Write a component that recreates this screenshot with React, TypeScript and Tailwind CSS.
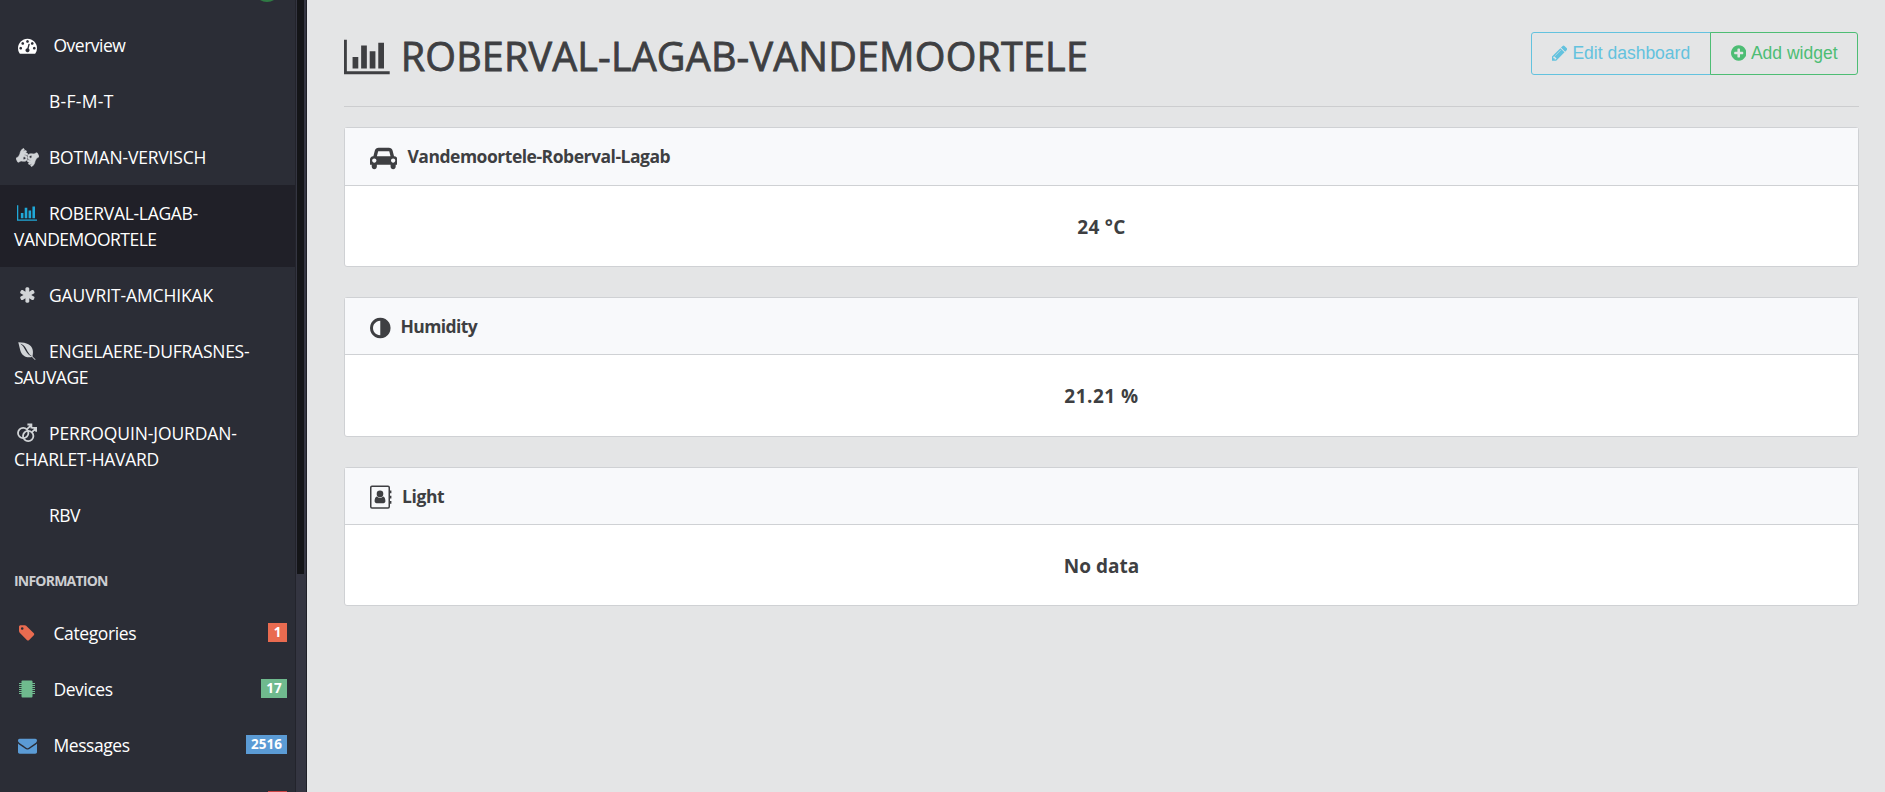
import React from "react";
import { FaAmericanSignLanguageInterpreting, FaEnvira } from "react-icons/fa";

type GlyphProps = { d: string; w?: number; size: number; cls?: string };

function Glyph({ d, w = 1792, size, cls = "" }: GlyphProps) {
  return (
    <svg viewBox={`0 0 ${w} 1792`} width={(size * w) / 1792} height={size} fill="currentColor" className={`shrink-0 ${cls}`}>
      <path d={d} />
    </svg>
  );
}

const CHART =
  "M640 896v512H384V896h256zm384-512v1024H768V384h256zm1024 1152v128H0V128h128v1408h1920zm-640-896v768h-256V640h256zm384-384v1152h-256V256h256z";
const TACHO =
  "M384 1152q0-53-37.5-90.5T256 1024t-90.5 37.5T128 1152t37.5 90.5T256 1280t90.5-37.5T384 1152zm192-448q0-53-37.5-90.5T448 576t-90.5 37.5T320 704t37.5 90.5T448 832t90.5-37.5T576 704zm428 481l101-382q6-26-7.5-48.5T1059 725t-48 6.5-30 39.5l-101 382q-60 5-107 43.5T710 1296q-20 77 20 146t117 89 146-20 89-117q16-60-6-117t-72-91zm660-33q0-53-37.5-90.5T1536 1024t-90.5 37.5-37.5 90.5 37.5 90.5 90.5 37.5 90.5-37.5 37.5-90.5zm-640-640q0-53-37.5-90.5T896 384t-90.5 37.5T768 512t37.5 90.5T896 640t90.5-37.5T1024 512zm448 192q0-53-37.5-90.5T1344 576t-90.5 37.5T1216 704t37.5 90.5T1344 832t90.5-37.5T1472 704zm320 448q0 261-141 483-19 29-54 29H195q-35 0-54-29Q0 1414 0 1152q0-182 71-348t191-286 286-191 348-71 348 71 286 191 191 286 71 348z";
const ASTERISK =
  "M1482 1050q46 26 59.5 77.5T1529 1225l-64 110q-26 46-77.5 59.5T1290 1382l-266-153v307q0 52-38 90t-90 38H768q-52 0-90-38t-38-90v-307l-266 153q-46 26-97.5 12.5T199 1335l-64-110q-26-46-12.5-97.5T182 1050l266-154-266-154q-46-26-59.5-77.5T135 567l64-110q26-46 77.5-59.5T374 410l266 153V256q0-52 38-90t90-38h128q52 0 90 38t38 90v307l266-153q46-26 97.5-12.5T1465 457l64 110q26 46 12.5 97.5T1482 742l-266 154z";
const TAG =
  "M448 448q0-53-37.5-90.5T320 320t-90.5 37.5T192 448t37.5 90.5T320 576t90.5-37.5T448 448zm1067 576q0 53-37 90l-491 492q-39 37-91 37-53 0-90-37L91 890q-38-37-64.5-101T0 672V256q0-52 38-90t90-38h416q53 0 117 26.5T763 219l715 714q37 39 37 91z";
const ENVELOPE =
  "M1792 710v794q0 66-47 113t-113 47H160q-66 0-113-47T0 1504V710q44 49 101 87 362 246 497 345 57 42 92.5 65.5t94.5 48 110 24.5h2q51 0 110-24.5t94.5-48 92.5-65.5q170-123 498-345 57-39 100-87zm0-294q0 79-49 151t-122 123q-376 261-468 325-10 7-42.5 31t-54 38.5-52 32.5-57.5 27-50 9h-2q-23 0-50-9t-57.5-27-52-32.5-54-38.5-42.5-31q-91-64-262-182.5T172 690q-62-42-117-115.5T0 438q0-78 41.5-130T160 256h1472q65 0 112.5 47t47.5 113z";
const PENCIL =
  "M363 1536l91-91-235-235-91 91v107h128v128h107zm523-928q0-22-22-22-10 0-17 7l-542 542q-7 7-7 17 0 22 22 22 10 0 17-7l542-542q7-7 7-17zm-54-192l416 416-832 832H0v-416zm683 96q0 53-37 90l-166 166-416-416 166-165q36-38 90-38 53 0 91 38l235 234q37 39 37 91z";
const PLUS =
  "M1216 960V832q0-26-19-45t-45-19H896V512q0-26-19-45t-45-19H704q-26 0-45 19t-19 45v256H384q-26 0-45 19t-19 45v128q0 26 19 45t45 19h256v256q0 26 19 45t45 19h128q26 0 45-19t19-45v-256h256q26 0 45-19t19-45zm320-64q0 209-103 385.5T1153.5 1561 768 1664t-385.5-103T103 1281.5 0 896t103-385.5T382.5 231 768 128t385.5 103T1433 510.5 1536 896z";
const ADJUST =
  "M768 1440V352q-148 0-273 73T297 623t-73 273 73 273 198 198 273 73zm768-544q0 209-103 385.5T1153.5 1561 768 1664t-385.5-103T103 1281.5 0 896t103-385.5T382.5 231 768 128t385.5 103T1433 510.5 1536 896z";
const CAR =
  "M480 1088q0-66-47-113t-113-47-113 47-47 113 47 113 113 47 113-47 47-113zm36-320h1016l-89-357q-2-8-14-17.5t-21-9.5H640q-9 0-21 9.5T605 411zm1372 320q0-66-47-113t-113-47-113 47-47 113 47 113 113 47 113-47 47-113zm160-96v384q0 14-9 23t-23 9h-96v128q0 80-56 136t-136 56-136-56-56-136v-128H512v128q0 80-56 136t-136 56-136-56-56-136v-128H32q-14 0-23-9t-9-23V992q0-93 65.500-158.500T224 768h28l105-419q23-94 104-157.500T640 128h768q98 0 179 63.500T1691 349l105 419h28q93 0 158.500 65.500T2048 992z";

function MarsDouble() {
  return (
    <svg viewBox="0 0 20 20" width="20" height="20" fill="none" stroke="currentColor" strokeWidth="1.8">
      <circle cx="6.200" cy="10" r="5.200" />
      <circle cx="11.200" cy="13" r="5.200" />
      <path d="M10 6.200L14 2.300M10.400 1.500h4v4M15 9.200l3.800-3.800M15.200 4.800h4v4" />
    </svg>
  );
}

function Microchip() {
  return (
    <svg viewBox="0 0 16 18" width="16" height="18" fill="currentColor">
      <rect x="2.500" y="0.500" width="11" height="17" rx="1" />
      <path d="M0 3h3v1H0zM0 5h3v1H0zM0 7h3v1H0zM0 9h3v1H0zM0 11h3v1H0zM0 13h3v1H0zM13 3h3v1h-3zM13 5h3v1h-3zM13 7h3v1h-3zM13 9h3v1h-3zM13 11h3v1h-3zM13 13h3v1h-3z" />
    </svg>
  );
}

function AddressBook() {
  return (
    <svg viewBox="0 0 22 24" width="22" height="24" fill="currentColor" className="mt-px shrink-0">
      <rect x="0.750" y="1.250" width="18.500" height="21.800" rx="1.200" fill="none" stroke="currentColor" strokeWidth="1.500" />
      <circle cx="10" cy="8.900" r="3.300" />
      <path d="M6.900 11.500c-1.500.5-2.300 2.200-2.300 4.600 0 1.300.8 2.200 1.900 2.200h7c1.100 0 1.900-.9 1.900-2.200 0-2.400-.8-4.100-2.300-4.600-1.700 1.700-4.500 1.700-6.200 0z" />
      <path d="M19 5.500h2.400v2.800H19zM19 10.700h2.400v2.800H19zM19 15.900h2.400v2.800H19z" />
    </svg>
  );
}

type NavProps = {
  icon?: React.ReactNode;
  lines: { text: string; cls: string }[];
  active?: boolean;
  iconCls?: string;
};

function DashboardLink({ icon, lines, active, iconCls = "text-[#d1d4d7]" }: NavProps) {
  return (
    <li className={active ? "bg-[#202028] py-[15px] pl-[14px]" : "py-[15px] pl-[14px]"}>
      <div className="flex h-[26px] items-center">
        <span className={`flex w-[26px] shrink-0 items-center justify-center ${iconCls}`}>{icon}</span>
        <span className={`ml-[9px] whitespace-nowrap leading-[26px] ${lines[0].cls}`}>{lines[0].text}</span>
      </div>
      {lines[1] && <div className={`h-[26px] whitespace-nowrap leading-[26px] ${lines[1].cls}`}>{lines[1].text}</div>}
    </li>
  );
}

type InfoProps = { icon: React.ReactNode; label: string; cls: string; iconCls: string; badge?: string; badgeCls?: string };

function InfoLink({ icon, label, cls, iconCls, badge, badgeCls = "" }: InfoProps) {
  return (
    <li className="flex h-14 shrink-0 items-center pr-2 pl-[14px]">
      <span className={`flex w-[26px] shrink-0 items-center justify-center ${iconCls}`}>{icon}</span>
      <span className={`ml-[13.5px] grow leading-[26px] ${cls}`}>{label}</span>
      {badge && (
        <span className={`mb-[1px] flex h-[19px] items-center justify-center text-[13.5px] font-bold text-white ${badgeCls}`}>
          {badge}
        </span>
      )}
    </li>
  );
}

type CardProps = { icon: React.ReactNode; title: string; value: string; titleCls: string; headCls: string; bodyCls: string; valueCls: string };

function Card({ icon, title, value, titleCls, headCls, bodyCls, valueCls }: CardProps) {
  return (
    <section className="mb-[30px] rounded-[3px] border border-[#cfd1d4] bg-white">
      <header className={`flex items-center border-b border-[#cfd1d4] bg-[#f8f9fb] pl-[25px] ${headCls}`}>
        {icon}
        <span className={`ml-[10px] whitespace-nowrap text-[17.5px] font-bold ${titleCls}`}>{title}</span>
      </header>
      <div className={`flex items-center justify-center pt-[2px] text-[19px] font-bold ${bodyCls}`}>
        <span className={valueCls}>{value}</span>
      </div>
    </section>
  );
}

export default function App() {
  return (
    <div className="flex h-[792px] w-[1885px] overflow-hidden bg-[#e4e5e6] font-['Open_Sans','Noto_Sans',sans-serif] text-[#3e3f42]">
      <aside className="flex h-full w-[307px] shrink-0 bg-[#2b2d36]">
        <nav className="flex h-full w-[295px] flex-col overflow-hidden text-[17.5px] text-white">
          <div className="flex h-[17px] shrink-0 items-start justify-end pr-[15px]">
            <span className="-mt-[24px] h-[26px] w-[26px] rounded-full bg-[#2f7a44]" />
          </div>
          <ul className="flex flex-col">
            <InfoLink icon={<Glyph d={TACHO} size={19} />} label="Overview" cls="tracking-[-0.5px]" iconCls="text-white" />
            <DashboardLink lines={[{ text: "B-F-M-T", cls: "tracking-[0.3px]" }]} />
            <DashboardLink
              icon={<FaAmericanSignLanguageInterpreting size={23} className="shrink-0" stroke="currentColor" strokeWidth={16} />}
              lines={[{ text: "BOTMAN-VERVISCH", cls: "tracking-[-0.18px]" }]}
            />
            <DashboardLink
              active
              iconCls="text-[#20a8d8]"
              icon={<Glyph d={CHART} w={2048} size={18} />}
              lines={[
                { text: "ROBERVAL-LAGAB-", cls: "tracking-[-0.3px]" },
                { text: "VANDEMOORTELE", cls: "tracking-[-0.5px]" },
              ]}
            />
            <DashboardLink icon={<Glyph d={ASTERISK} w={1664} size={18} />} lines={[{ text: "GAUVRIT-AMCHIKAK", cls: "tracking-[-0.12px]" }]} />
            <DashboardLink
              icon={<FaEnvira size={20} />}
              lines={[
                { text: "ENGELAERE-DUFRASNES-", cls: "tracking-[-0.26px]" },
                { text: "SAUVAGE", cls: "tracking-[-0.5px]" },
              ]}
            />
            <DashboardLink
              icon={<MarsDouble />}
              lines={[
                { text: "PERROQUIN-JOURDAN-", cls: "tracking-[-0.12px]" },
                { text: "CHARLET-HAVARD", cls: "tracking-[-0.28px]" },
              ]}
            />
            <DashboardLink lines={[{ text: "RBV", cls: "tracking-[-0.5px]" }]} />
            <li className="h-[62px] shrink-0 pt-[27px] pl-[14px] text-[14px] leading-[22px] font-bold tracking-[-0.78px] text-[#cdced1]">
              INFORMATION
            </li>
            <InfoLink icon={<Glyph d={TAG} w={1536} size={18} />} label="Categories" cls="tracking-[-0.4px]" iconCls="text-[#e96b50]" badge="1" badgeCls="w-[19px] bg-[#e96b50]" />
            <InfoLink icon={<Microchip />} label="Devices" cls="tracking-[-0.45px]" iconCls="text-[#6fba8e]" badge="17" badgeCls="w-[26px] bg-[#6fba8e]" />
            <InfoLink icon={<Glyph d={ENVELOPE} size={19} />} label="Messages" cls="tracking-[-0.45px]" iconCls="text-[#5b9bd5]" badge="2516" badgeCls="w-[41px] bg-[#5b9bd5]" />
            <li className="flex h-14 shrink-0 justify-end pt-[18px] pr-2">
              <span className="h-[19px] w-[19px] bg-[#d04444]" />
            </li>
          </ul>
        </nav>
        <div className="h-full w-[12px] border-r border-l border-r-[#1f2028] border-l-[#23242c] bg-[#343541] pl-px">
          <div className="h-[574px] w-[7px] bg-[#141518]" />
        </div>
      </aside>

      <main className="flex grow flex-col pr-[26px] pl-[37px]">
        <div className="flex h-[107px] shrink-0 items-start justify-between border-b border-[#cccdcf]">
          <h1 className="mt-[26px] flex items-center text-[39.5px] leading-[60px]">
            <Glyph d={CHART} w={2048} size={40} cls="mb-[2px]" />
            <span className="mb-[3px] ml-[11px] whitespace-nowrap tracking-[0.16px] [-webkit-text-stroke:0.8px_#3e3f42]">
              ROBERVAL-LAGAB-VANDEMOORTELE
            </span>
          </h1>
          <div className="mt-8 mr-px flex h-[43px] font-['Liberation_Sans',Arial,sans-serif] text-[17.5px]">
            <button className="flex w-[180px] items-center rounded-l-[3px] border border-[#63c2de] pl-5 text-[#63c2de]">
              <Glyph d={PENCIL} w={1536} size={18} cls="mb-px" />
              <span className="ml-[5px] whitespace-nowrap">Edit dashboard</span>
            </button>
            <button className="-ml-px flex w-[148px] items-center rounded-r-[3px] border border-[#4dbd74] pl-[19.5px] text-[#4dbd74]">
              <Glyph d={PLUS} w={1536} size={18} cls="mb-px" />
              <span className="ml-[5px] whitespace-nowrap">Add widget</span>
            </button>
          </div>
        </div>

        <div className="pt-5">
          <Card icon={<Glyph d={CAR} w={2048} size={24} cls="mt-[3px]" />} title="Vandemoortele-Roberval-Lagab" value="24 °C" titleCls="tracking-[-0.48px]" headCls="h-[58px]" bodyCls="h-[80px]" valueCls="tracking-[0.3px]" />
          <Card icon={<Glyph d={ADJUST} w={1536} size={24} cls="mt-[3px]" />} title="Humidity" value="21.21 %" titleCls="tracking-[-0.6px]" headCls="h-[57px]" bodyCls="h-[81px]" valueCls="tracking-[0.5px]" />
          <Card icon={<AddressBook />} title="Light" value="No data" titleCls="tracking-[-0.4px]" headCls="h-[57px]" bodyCls="h-[80px]" valueCls="tracking-[0px]" />
        </div>
      </main>
    </div>
  );
}
